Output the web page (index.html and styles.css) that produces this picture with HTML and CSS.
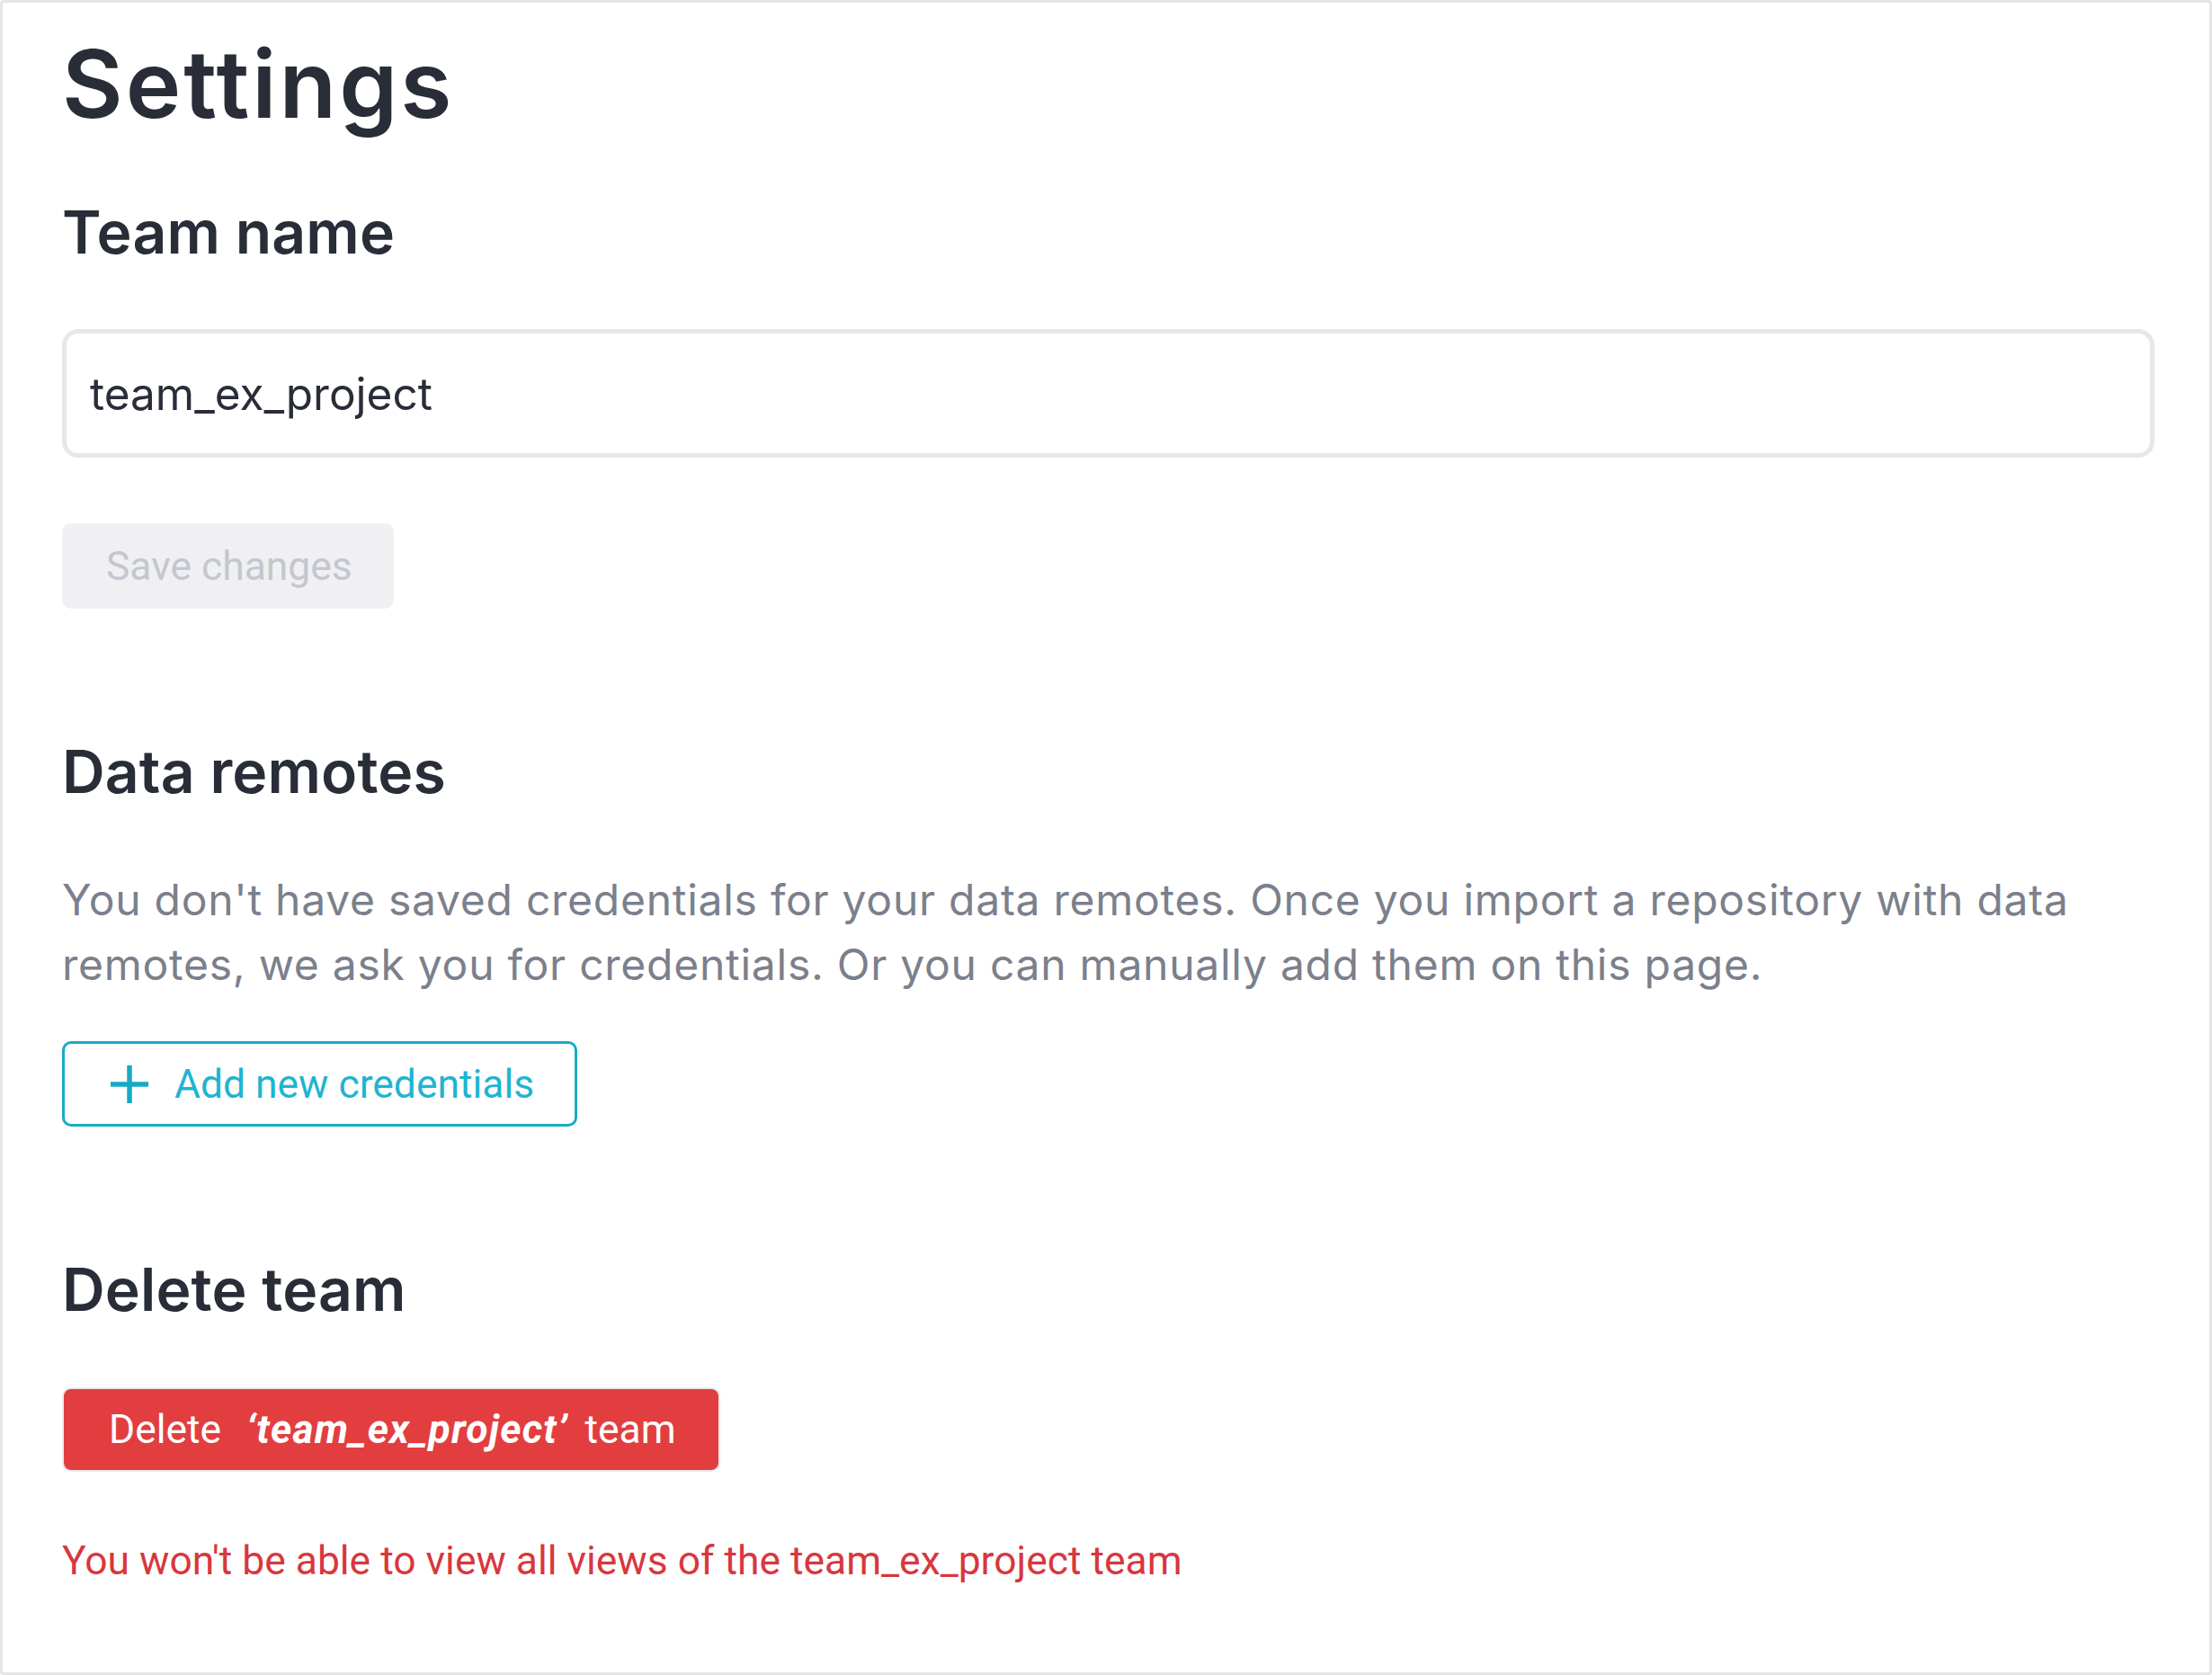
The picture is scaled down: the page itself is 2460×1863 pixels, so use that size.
FILE: index.html
```html
<!DOCTYPE html>
<html lang="en">
<head>
<meta charset="utf-8">
<title>Settings</title>
<link rel="stylesheet" href="styles.css">
</head>
<body>
<main class="page">
  <h1 class="title">Settings</h1>

  <section class="section">
    <h2 class="section-title">Team name</h2>
    <input class="text-input" type="text" value="team_ex_project">
    <button class="btn btn-disabled" type="button">Save changes</button>
  </section>

  <section class="section section-remotes">
    <h2 class="section-title">Data remotes</h2>
    <p class="description">You don't have saved credentials for your data remotes. Once you import a repository with data remotes, we ask you for credentials. Or you can manually add them on this page.</p>
    <button class="btn btn-outline" type="button">
      <svg class="plus-icon" width="42" height="42" viewBox="0 0 42 42" aria-hidden="true"><path d="M21 0V42M0 21H42" stroke="currentColor" stroke-width="5.5" fill="none"/></svg>
      <span>Add new credentials</span>
    </button>
  </section>

  <section class="section section-delete">
    <h2 class="section-title">Delete team</h2>
    <button class="btn btn-danger" type="button">Delete <span class="team-ref">‘team_ex_project’</span> team</button>
    <p class="warning">You won't be able to view all views of the team_ex_project team</p>
  </section>
</main>
</body>
</html>
```

FILE: styles.css
```css
html, body {
  margin: 0;
  padding: 0;
  background: #ffffff;
}

.page {
  box-sizing: border-box;
  width: 2460px;
  height: 1863px;
  border: 3px solid #e5e5e7;
  border-radius: 4px;
  padding: 28px 61px 0 66px;
  font-family: "Inter", "Noto Sans", sans-serif;
  color: #292d38;
  display: flex;
  flex-direction: column;
}

.title {
  margin: 0;
  font-size: 104px;
  line-height: 124px;
  font-weight: 600;
  letter-spacing: 3px;
}

.section {
  display: flex;
  flex-direction: column;
  align-items: flex-start;
}

.section:first-of-type {
  margin-top: 63px;
}

.section-remotes,
.section-delete {
  margin-top: 141px;
}

.section-title {
  margin: 0;
  font-size: 66px;
  line-height: 80px;
  font-weight: 600;
  letter-spacing: 0.15px;
}

.text-input {
  box-sizing: border-box;
  margin-top: 68px;
  width: 100%;
  height: 143px;
  border: 5px solid #e5e7eb;
  border-radius: 18px;
  padding: 0 26px;
  font-family: "Inter", "Noto Sans", sans-serif;
  font-size: 49.5px;
  color: #292d38;
  background: #ffffff;
  outline: none;
}

.btn {
  box-sizing: border-box;
  display: inline-flex;
  align-items: center;
  font-family: "Roboto", "Liberation Sans", sans-serif;
  font-size: 44.4px;
  line-height: normal;
  border-radius: 10px;
  cursor: pointer;
  white-space: nowrap;
}

.btn-disabled {
  margin-top: 73px;
  height: 95px;
  padding: 0 46px 0 49px;
  border: none;
  background: #f0f0f2;
  color: #c3c7cf;
}

.description {
  margin: 67px 0 0;
  font-size: 48px;
  line-height: 72px;
  letter-spacing: 0.74px;
  color: #7b808c;
}

.btn-outline {
  margin-top: 49px;
  height: 95px;
  padding: 0 45px 0 51px;
  gap: 29px;
  border: 3px solid #17abc9;
  background: #ffffff;
  color: #1fb4d2;
}

.plus-icon {
  display: block;
  color: #16a9c7;
}

.btn-danger {
  margin-top: 69px;
  height: 94px;
  padding: 0 47px 0 50px;
  border: 2px solid #efeaea;
  background: #e23e40;
  color: #ffffff;
}

.team-ref {
  font-weight: 700;
  font-style: italic;
  letter-spacing: 1.2px;
  margin: 0 19px 0 28px;
}

.warning {
  margin: 72px 0 0;
  font-family: "Roboto", "Liberation Sans", sans-serif;
  font-size: 44.4px;
  line-height: 54px;
  color: #d8373d;
}
```
